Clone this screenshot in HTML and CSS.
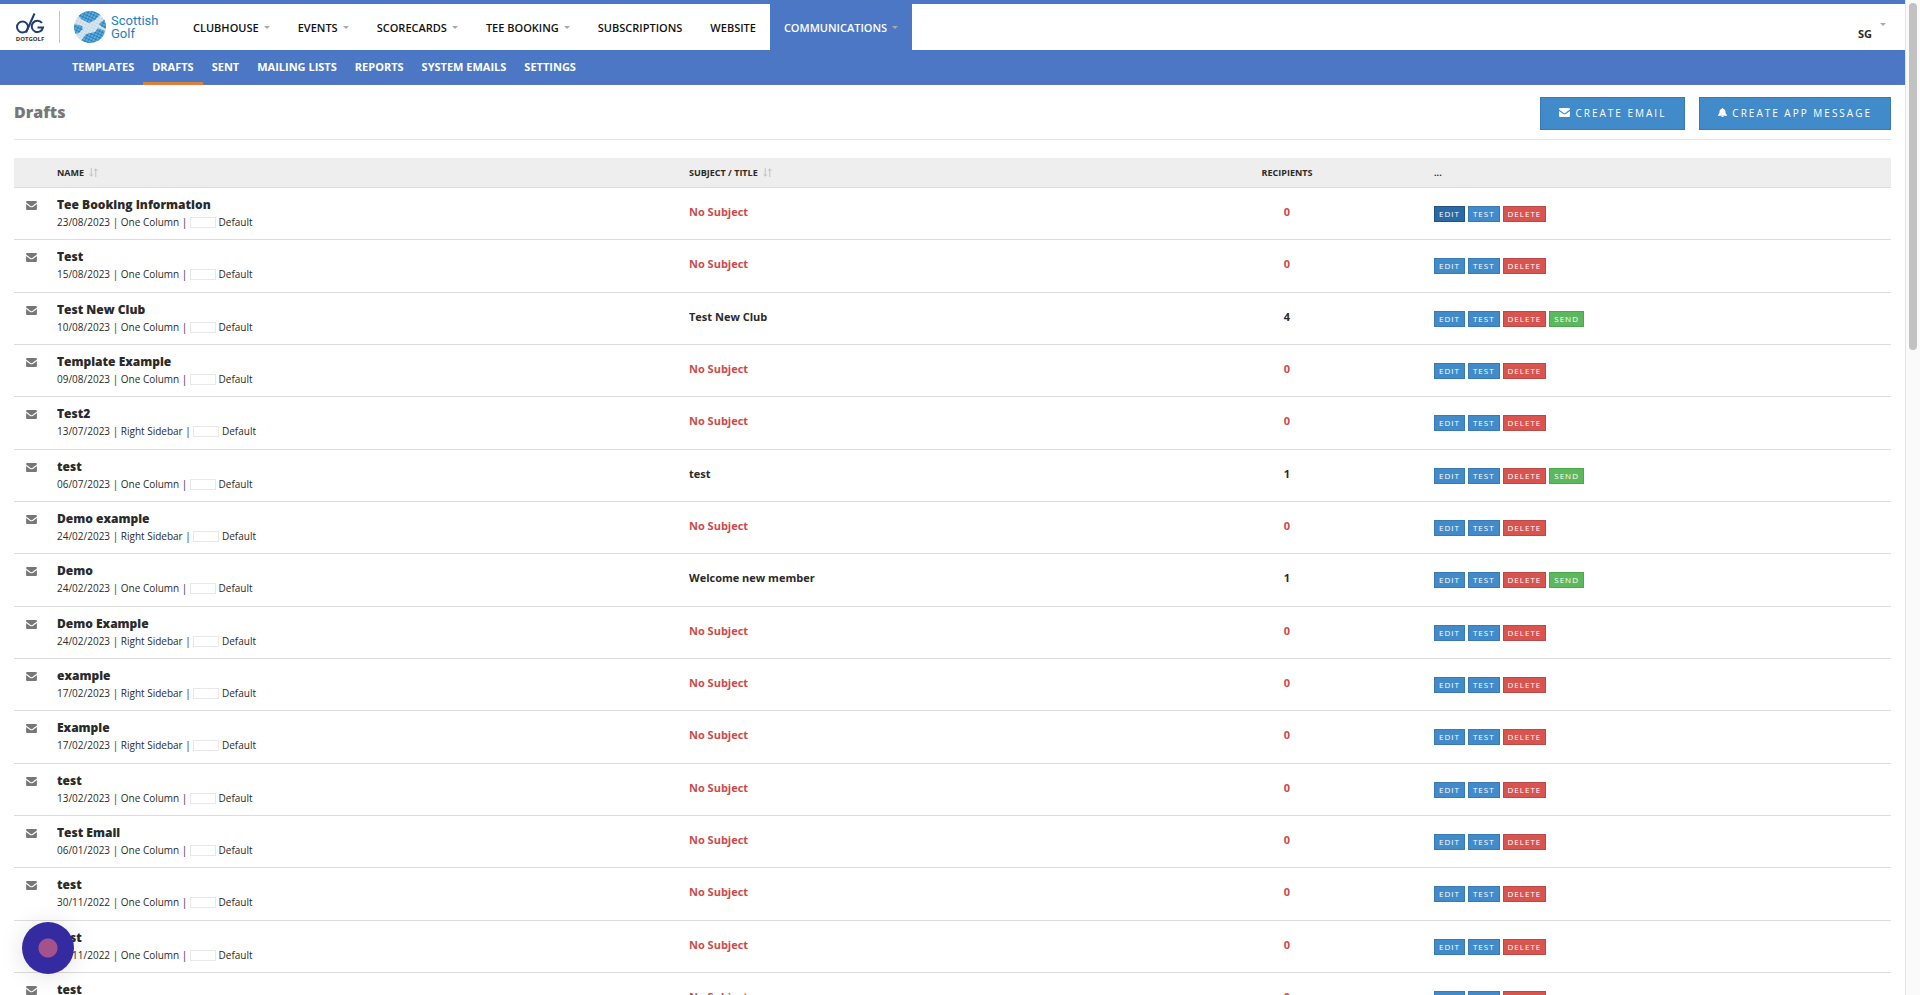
FILE: index.html
```html
<!DOCTYPE html>
<html lang="en">
<head>
  <meta charset="UTF-8">
  <title>Drafts - Communications</title>
  <link rel="stylesheet" href="styles.css">
</head>
<body>
  <svg class="sprite" aria-hidden="true">
    <symbol id="mail" viewBox="0 0 12 10">
      <path d="M1 0h10a1 1 0 0 1 1 1v.8C9.500 3.600 8 5 6.800 5.600a1.600 1.600 0 0 1-1.600 0C4 5 2.500 3.600 0 1.800V1a1 1 0 0 1 1-1z"/>
      <path d="M0 3.200c2 1.400 3.400 2.700 4.600 3.400a2.700 2.700 0 0 0 2.800 0C8.600 5.900 10 4.600 12 3.200V9a1 1 0 0 1-1 1H1a1 1 0 0 1-1-1z"/>
    </symbol>
    <symbol id="bell" viewBox="0 0 10 10">
      <path d="M5 0c.5 0 .8.300.8.800C7.600 1.200 8.300 2.600 8.300 4.200c0 1.800.6 2.700 1.700 3.600v.7H0v-.7c1.100-.9 1.700-1.800 1.700-3.600C1.700 2.600 2.400 1.200 4.200.8 4.200.3 4.500 0 5 0z"/>
      <path d="M3.600 8.800h2.800a1.400 1.200 0 0 1-2.800 0z"/>
    </symbol>
    <symbol id="sort" viewBox="0 0 10 10">
      <path d="M2.500 0v9M.5 7l2 2 2-2M7.500 10V1M5.500 3l2-2 2 2"/>
    </symbol>
  </svg>

  <div class="page">
    <header class="topbar">
      <a class="logo" href="#" aria-label="Home">
        <svg class="logo-dotgolf" viewBox="0 0 30 30">
          <g fill="none" stroke="#1f3c73" stroke-width="2">
            <circle cx="7.500" cy="15" r="5.500"/>
            <path d="M11 20.500 19.500 1.500"/>
            <path d="M27 11a5.700 5.700 0 1 0 1 4.500h-5.500"/>
          </g>
          <text x="15" y="29" text-anchor="middle">DOTGOLF</text>
        </svg>
        <span class="logo-rule"></span>
        <svg class="logo-globe" viewBox="0 0 32 32">
          <defs>
            <pattern id="dots" width="3" height="3" patternUnits="userSpaceOnUse" patternTransform="rotate(25)">
              <rect width="3" height="3" fill="#8cc4e6"/>
              <circle cx="1.500" cy="1.500" r="1.300" fill="#1279ba"/>
            </pattern>
            <pattern id="pale" width="3" height="3" patternUnits="userSpaceOnUse" patternTransform="rotate(25)">
              <rect width="3" height="3" fill="#e6eff6"/>
              <circle cx="1.500" cy="1.500" r="1.200" fill="#bfd3e4"/>
            </pattern>
            <clipPath id="ball"><circle cx="16" cy="16" r="16"/></clipPath>
          </defs>
          <g clip-path="url(#ball)">
            <rect width="32" height="32" fill="url(#pale)"/>
            <path d="M4 4 12 0h13l2 3-6 6-6 3-8-4zM0 13l8 2 1 3-4 4-5 1zM32 7l-7 6 3 3 4 2zM7 30l5-7 9-2 3-4 7 3-3 9-12 4z" fill="url(#dots)"/>
          </g>
        </svg>
        <span class="logo-text">Scottish<br>Golf</span>
      </a>
      <nav class="main-nav">
        <a href="#">CLUBHOUSE <i class="caret"></i></a>
        <a href="#">EVENTS <i class="caret"></i></a>
        <a href="#">SCORECARDS <i class="caret"></i></a>
        <a href="#">TEE BOOKING <i class="caret"></i></a>
        <a href="#">SUBSCRIPTIONS</a>
        <a href="#">WEBSITE</a>
        <a href="#" class="active">COMMUNICATIONS <i class="caret"></i></a>
      </nav>
      <a class="user" href="#"><span>SG</span><i class="caret"></i></a>
    </header>

    <nav class="sub-nav">
      <a href="#">TEMPLATES</a>
      <a href="#" class="active">DRAFTS</a>
      <a href="#">SENT</a>
      <a href="#">MAILING LISTS</a>
      <a href="#">REPORTS</a>
      <a href="#">SYSTEM EMAILS</a>
      <a href="#">SETTINGS</a>
    </nav>

    <main>
      <div class="page-head">
        <h1>Drafts</h1>
        <div class="page-actions">
          <button class="btn-lg"><svg class="icon-mail"><use href="#mail"/></svg>CREATE EMAIL</button>
          <button class="btn-lg"><svg class="icon-bell"><use href="#bell"/></svg>CREATE APP MESSAGE</button>
        </div>
      </div>

      <table class="drafts">
        <colgroup>
          <col class="col-icon">
          <col class="col-name">
          <col class="col-subject">
          <col class="col-recipients">
          <col>
        </colgroup>
        <thead>
          <tr>
            <th></th>
            <th>NAME <svg class="icon-sort"><use href="#sort"/></svg></th>
            <th>SUBJECT / TITLE <svg class="icon-sort"><use href="#sort"/></svg></th>
            <th class="center">RECIPIENTS</th>
            <th>...</th>
          </tr>
        </thead>
        <tbody id="rows"></tbody>
      </table>
    </main>
  </div>

  <div class="scroll-track"><div class="scroll-thumb"></div></div>
  <button class="recorder" aria-label="Record"></button>

  <script>
    // name, date, layout, subject, recipients
    const drafts = [
      ["Tee Booking Information", "23/08/2023", "One Column", "", 0],
      ["Test", "15/08/2023", "One Column", "", 0],
      ["Test New Club", "10/08/2023", "One Column", "Test New Club", 4],
      ["Template Example", "09/08/2023", "One Column", "", 0],
      ["Test2", "13/07/2023", "Right Sidebar", "", 0],
      ["test", "06/07/2023", "One Column", "test", 1],
      ["Demo example", "24/02/2023", "Right Sidebar", "", 0],
      ["Demo", "24/02/2023", "One Column", "Welcome new member", 1],
      ["Demo Example", "24/02/2023", "Right Sidebar", "", 0],
      ["example", "17/02/2023", "Right Sidebar", "", 0],
      ["Example", "17/02/2023", "Right Sidebar", "", 0],
      ["test", "13/02/2023", "One Column", "", 0],
      ["Test Email", "06/01/2023", "One Column", "", 0],
      ["test", "30/11/2022", "One Column", "", 0],
      ["test", "30/11/2022", "One Column", "", 0],
      ["test", "30/11/2022", "One Column", "", 0]
    ];

    document.getElementById("rows").innerHTML = drafts.map(([name, date, layout, subject, count], i) => `
      <tr>
        <td class="type"><svg class="icon-mail"><use href="#mail"/></svg></td>
        <td>
          <a class="name" href="#">${name}</a>
          <div class="meta">${date} | ${layout} | <span class="swatch"></span> Default</div>
        </td>
        <td class="subject ${subject ? "" : "missing"}">${subject || "No Subject"}</td>
        <td class="subject center ${count ? "" : "missing"}">${count}</td>
        <td class="actions">
          <div class="buttons">
            <button class="btn ${i === 0 ? "pressed" : ""}">EDIT</button>
            <button class="btn">TEST</button>
            <button class="btn danger">DELETE</button>
            ${subject ? '<button class="btn success">SEND</button>' : ""}
          </div>
        </td>
      </tr>`).join("");
  </script>
</body>
</html>
```

FILE: styles.css
```css
* {
  box-sizing: border-box;
}
body {
  margin: 0;
  height: 100vh;
  display: flex;
  overflow: hidden;
  background: #fff;
  font-family: "Open Sans", "Noto Sans", sans-serif;
  font-size: 12px;
  color: #2a2a2a;
}
a {
  color: inherit;
  text-decoration: none;
}
button {
  font-family: inherit;
  cursor: pointer;
}
.sprite {
  position: absolute;
  width: 0;
  height: 0;
}
.page {
  flex: 1;
  min-width: 0;
}

/* top bar */
.topbar {
  display: flex;
  height: 50px;
  border-top: 4px solid #4b77c4;
}
.logo {
  display: flex;
  align-items: center;
  width: 179px;
  padding-left: 15px;
}
.logo-dotgolf {
  width: 30px;
  height: 30px;
}
.logo-dotgolf text {
  font-size: 6px;
  font-weight: 700;
  fill: #333;
}
.logo-rule {
  width: 1px;
  height: 32px;
  margin: 0 14px;
  background: #c4c4c4;
}
.logo-globe {
  width: 32px;
  height: 32px;
  margin-right: 5px;
}
.logo-text {
  font-family: Roboto, sans-serif;
  font-size: 13px;
  line-height: 13px;
  color: #1f7fbd;
}
.main-nav {
  display: flex;
}
.main-nav a {
  display: flex;
  align-items: center;
  gap: 5px;
  padding: 0 14px;
  font-size: 11px;
  font-weight: 600;
  color: #111;
}
.main-nav .active {
  background: #4b77c4;
  color: #fff;
}
.caret {
  border: 3px solid transparent;
  border-top-color: #aaa;
  border-bottom: 0;
}
.user {
  display: flex;
  gap: 8px;
  margin-left: auto;
  padding: 19px 19px 0 0;
  font-size: 11px;
  font-weight: 700;
}
.user span {
  padding-top: 3px;
}

/* section tabs */
.sub-nav {
  display: flex;
  height: 35px;
  padding-left: 63px;
  background: #4b77c4;
  border-bottom: 1px solid #5f7bb0;
}
.sub-nav a {
  height: 35px;
  padding: 0 9px;
  border-bottom: 3px solid transparent;
  font-size: 11px;
  font-weight: 700;
  line-height: 34px;
  color: #fff;
}
.sub-nav .active {
  border-color: #d9823b;
}

main {
  padding: 0 14px;
}
.page-head {
  display: flex;
  justify-content: space-between;
  height: 55px;
  padding-top: 12px;
  border-bottom: 1px solid #e2e8e8;
}
h1 {
  margin: 0;
  font-size: 16px;
  font-weight: 800;
  line-height: 30px;
  color: #777;
}
.page-actions {
  display: flex;
  align-items: flex-start;
  gap: 14px;
}
.btn-lg {
  display: flex;
  align-items: center;
  gap: 5px;
  height: 33px;
  padding: 0 18px 2px;
  border: 1px solid #3a7ab0;
  background: #428bca;
  color: #fff;
  font-size: 10px;
  letter-spacing: 2px;
}
svg {
  fill: currentColor;
}
.icon-mail {
  width: 11px;
  height: 9px;
}
.icon-bell {
  width: 9px;
  height: 9px;
}
.icon-sort {
  width: 9px;
  height: 9px;
  margin-left: 3px;
  fill: none;
  stroke: #bbb;
  vertical-align: -1px;
}

/* drafts table */
.drafts {
  width: 100%;
  margin-top: 18px;
  border-collapse: collapse;
  table-layout: fixed;
}
.col-icon {
  width: 36px;
}
.col-name {
  width: 632px;
}
.col-subject {
  width: 465px;
}
.col-recipients {
  width: 280px;
}
.drafts th {
  height: 29px;
  padding: 0 7px;
  background: #eee;
  border-bottom: 1px solid #ddd;
  font-size: 9px;
  font-weight: 700;
  text-align: left;
}
.drafts td {
  height: 52px;
  padding: 8px 7px 0;
  border-bottom: 1px solid #ddd;
  vertical-align: top;
}
.drafts tbody tr:nth-child(3n+2) td {
  height: 53px;
}
.drafts .center {
  text-align: center;
}
.drafts .type {
  padding: 13px 0 0 12px;
  line-height: 9px;
  color: #777;
}
.name {
  display: block;
  font-size: 12px;
  font-weight: 800;
  line-height: 17px;
}
.meta {
  font-size: 10px;
  line-height: 18px;
}
.swatch {
  display: inline-block;
  width: 26px;
  height: 11px;
  border: 1px solid #e8e8e8;
  vertical-align: -2px;
}
.drafts .subject {
  padding-top: 15px;
  font-size: 11px;
  font-weight: 700;
  line-height: 17px;
}
.drafts .missing {
  color: #cb4b4b;
}
.drafts .actions {
  padding-top: 18px;
}
.buttons {
  display: flex;
  gap: 3px;
}
.btn {
  height: 16px;
  padding: 0 4px;
  border: 1px solid #3a7ab0;
  background: #428bca;
  color: #fff;
  font-size: 8px;
  line-height: 14px;
  letter-spacing: 1px;
}
.btn.pressed {
  background: #2a69a5;
  border-color: #235280;
}
.btn.danger {
  background: #d9534f;
  border-color: #b94a4a;
}
.btn.success {
  background: #5cb85c;
  border-color: #4da54d;
}

.scroll-track {
  width: 15px;
  padding: 3px 3px 0;
  border-left: 1px solid #e4e4e4;
  background: #fafafa;
}
.scroll-thumb {
  height: 35%;
  border-radius: 4px;
  background: #c2c2c2;
}
.recorder {
  position: fixed;
  left: 22px;
  bottom: 21px;
  width: 52px;
  height: 52px;
  padding: 0;
  border: 0;
  border-radius: 50%;
  background: radial-gradient(circle, #a5528c 9px, #352ba0 10px);
  box-shadow: 0 2px 24px rgba(0, 0, 0, 0.12);
}
```
